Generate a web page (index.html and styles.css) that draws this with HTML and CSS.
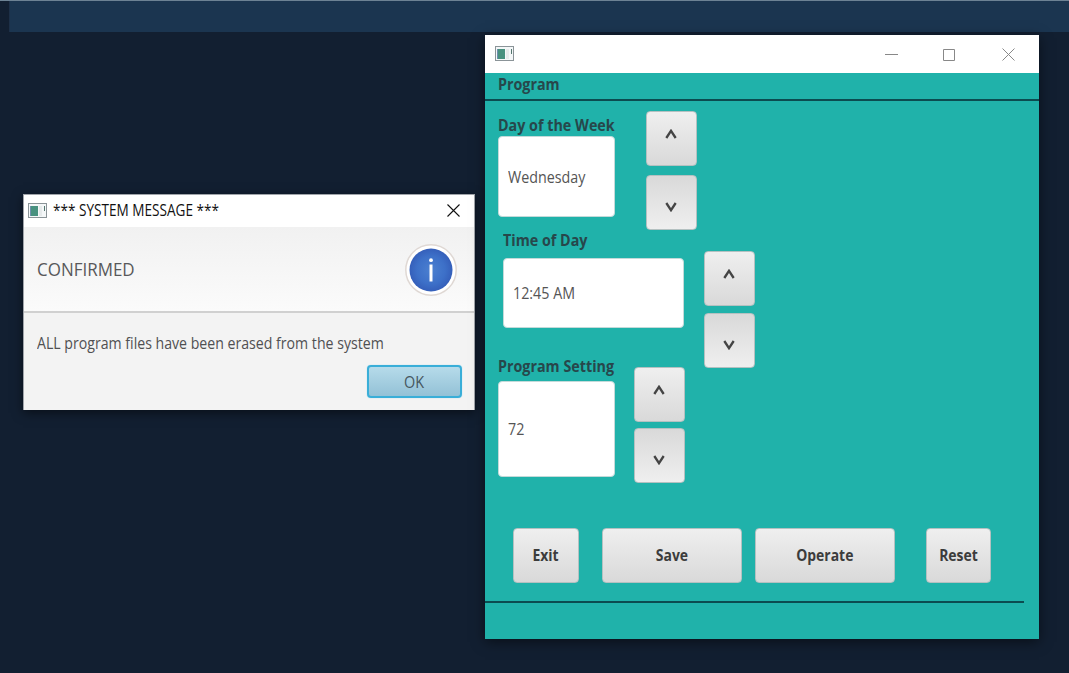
FILE: index.html
```html
<!DOCTYPE html>
<html lang="en">
<head>
<meta charset="utf-8">
<title>Program</title>
<link rel="stylesheet" href="styles.css">
</head>
<body>
<div class="desktop">
  <div class="top-strip"></div>

  <section class="window dialog">
    <header class="dialog-title">
      <svg class="app-icon" width="19" height="15" viewBox="0 0 19 15"><rect x=".5" y=".5" width="18" height="14" fill="#f4f7f8" stroke="#8b9498"/><rect x="2" y="3" width="8" height="10" fill="#48917f"/><path d="M2.500 3v10" stroke="#6f8fae"/><path d="M12.500 3v10" stroke="#e6eaeb" stroke-width="3"/><path d="M16.500 3v5" stroke="#54766f"/></svg>
      <span class="caption">*** SYSTEM MESSAGE ***</span>
      <svg class="close" width="13" height="13" viewBox="0 0 13 13"><path d="M.5.500l12 12M12.500.500l-12 12" stroke="#111" stroke-width="1.100"/></svg>
    </header>
    <div class="dialog-header">
      <span class="confirmed">CONFIRMED</span>
      <svg class="info" width="52" height="52" viewBox="0 0 52 52">
        <defs><radialGradient id="blue"><stop offset="0" stop-color="#4b80d0"/><stop offset=".65" stop-color="#3d70c8"/><stop offset="1" stop-color="#355fba"/></radialGradient></defs>
        <circle cx="26" cy="26" r="25.200" fill="#fff" stroke="#dfd8d4" stroke-width="1.500"/>
        <circle cx="26" cy="26" r="21.500" fill="url(#blue)"/>
        <circle cx="26" cy="16.200" r="1.900" fill="#fff"/>
        <path d="M26 20.500v17" stroke="#fff" stroke-width="3"/>
      </svg>
    </div>
    <div class="dialog-body">
      <p class="message"><span>ALL program files have been erased from the system</span></p>
      <button class="ok"><span>OK</span></button>
    </div>
  </section>

  <section class="window program">
    <header class="program-title">
      <svg class="app-icon" width="19" height="15" viewBox="0 0 19 15"><rect x=".5" y=".5" width="18" height="14" fill="#f4f7f8" stroke="#8b9498"/><rect x="2" y="3" width="8" height="10" fill="#48917f"/><path d="M2.500 3v10" stroke="#6f8fae"/><path d="M12.500 3v10" stroke="#e6eaeb" stroke-width="3"/><path d="M16.500 3v5" stroke="#54766f"/></svg>
      <svg class="controls" width="130" height="13" viewBox="0 0 130 13" fill="none" stroke="#888"><path d="M0 6.500h13M58.500 1.500h11v11h-11zM117.500.500l12 12M129.500.500l-12 12"/></svg>
    </header>
    <div class="heading"><span class="label">Program</span></div>
    <div class="group day">
      <div class="entry"><span class="label">Day of the Week</span><div class="field"><span>Wednesday</span></div></div>
      <div class="spinner">
        <button class="btn up"><svg width="12" height="10" viewBox="0 0 12 10"><path d="M1.300 9L6 1.800 10.700 9"/></svg></button>
        <button class="btn down"><svg width="12" height="10" viewBox="0 0 12 10"><path d="M1.300 1L6 8.200 10.700 1"/></svg></button>
      </div>
    </div>
    <div class="group time">
      <div class="entry"><span class="label">Time of Day</span><div class="field"><span>12:45 AM</span></div></div>
      <div class="spinner">
        <button class="btn up"><svg width="12" height="10" viewBox="0 0 12 10"><path d="M1.300 9L6 1.800 10.700 9"/></svg></button>
        <button class="btn down"><svg width="12" height="10" viewBox="0 0 12 10"><path d="M1.300 1L6 8.200 10.700 1"/></svg></button>
      </div>
    </div>
    <div class="group setting">
      <div class="entry"><span class="label">Program Setting</span><div class="field"><span>72</span></div></div>
      <div class="spinner">
        <button class="btn up"><svg width="12" height="10" viewBox="0 0 12 10"><path d="M1.300 9L6 1.800 10.700 9"/></svg></button>
        <button class="btn down"><svg width="12" height="10" viewBox="0 0 12 10"><path d="M1.300 1L6 8.200 10.700 1"/></svg></button>
      </div>
    </div>
    <div class="actions">
      <button class="btn exit"><span>Exit</span></button>
      <button class="btn save"><span>Save</span></button>
      <button class="btn operate"><span>Operate</span></button>
      <button class="btn reset"><span>Reset</span></button>
    </div>
    <div class="rule"></div>
  </section>
</div>
</body>
</html>
```
FILE: styles.css
```css
* { box-sizing: border-box; }
body { margin: 0; font-family: "Open Sans", "Noto Sans", sans-serif; }
button { margin: 0; padding: 0; font: inherit; }
svg { display: block; flex: none; }
span { white-space: nowrap; }

.desktop { position: relative; width: 1069px; height: 673px; overflow: hidden; background: #121f31; border-top: 1px solid #6d8294; }
.top-strip { height: 31px; margin-left: 9px; background: #1b3550; border-left: 1px solid #1d3048; }

.window { position: absolute; }
.dialog { left: 23px; top: 193px; width: 452px; height: 216px; border: 1px solid #a0a4aa; border-width: 1px 1px 0; background: #f3f3f3; box-shadow: 0 3px 10px rgba(0,0,0,.5); }
.dialog-title { display: flex; align-items: center; height: 32px; padding: 0 14px 2px 4px; background: #fff; }
.caption { margin-left: 6px; font-size: 15.500px; color: #111; transform-origin: left; transform: scaleX(.877); }
.close { margin-left: auto; }
.dialog-header { display: flex; align-items: center; justify-content: space-between; height: 86px; padding: 0 17px 0 13px; background: linear-gradient(#f1f1f1, #fbfbfb); border-bottom: 2px solid #d0d0d0; }
.info { margin-top: 2px; }
.confirmed { font-size: 17.500px; color: #58585a; transform-origin: left; transform: scaleX(.97); }
.dialog-body { display: flex; flex-direction: column; padding: 18px 12px 0 13px; }
.message { height: 24px; margin: 0; font-size: 16px; line-height: 24px; color: #505052; }
.message span { display: inline-block; transform-origin: left; transform: scaleX(.883); }
.ok { align-self: flex-end; width: 95px; height: 33px; margin-top: 10px; border: 2px solid #39aed8; border-radius: 4px; background: linear-gradient(#b6dbea, #93c1d6); box-shadow: 0 0 1px #6dc9e8; font-size: 16px; line-height: 28px; color: #46565e; }
.ok span { display: inline-block; transform: scaleX(.9); }

.program { left: 485px; top: 34px; width: 554px; height: 604px; background: #20b2aa; box-shadow: 0 3px 12px rgba(0,0,0,.5); }
.program-title { display: flex; align-items: center; justify-content: space-between; height: 38px; padding: 0 24px 2px 10px; background: #fff; }
.controls { margin-top: 2px; }
.heading { height: 28px; padding: 1px 13px 0; border-bottom: 2px solid #0b4c50; }
.label { display: block; width: max-content; font-size: 16px; font-weight: 700; line-height: 20px; color: #27474b; transform-origin: left; transform: scaleX(.895); }
.group { display: flex; padding-left: 13px; }
.entry { width: 117px; flex: none; }
.field { display: flex; align-items: center; width: 117px; padding: 0 0 0 9px; border: 1px solid #c3dad9; border-radius: 4px; background: #fff; font-size: 16px; color: #555; }
.field span { transform-origin: left; transform: scaleX(.893); }
.spinner { display: flex; flex-direction: column; }
.btn { display: flex; align-items: center; justify-content: center; width: 51px; height: 55px; flex: none; padding-bottom: 2px; border: 1px solid #b4c1c1; border-radius: 4px; background: linear-gradient(#efefef, #d9d9d9); font-size: 15.500px; font-weight: 700; color: #3c3c3c; }
.btn span { transform: scaleX(.9); }
.btn svg { fill: none; stroke: #444; stroke-width: 2.300; }
.up { padding: 0 1px 9px 0; }
.down { padding: 8px 1px 0 0; background: linear-gradient(#d9d9d9, #efefef); }

.day { height: 129px; padding-top: 14px; }
.day .field { height: 81px; margin-top: 1px; }
.day .spinner { gap: 9px; margin: -4px 0 0 31px; }
.time { height: 126px; padding-left: 18px; }
.time .entry, .time .field { width: 181px; }
.time .field { height: 70px; margin-top: 8px; }
.time .spinner { gap: 7px; margin: 21px 0 0 20px; }
.setting { height: 172px; }
.setting .field { height: 96px; margin-top: 5px; }
.setting .spinner { gap: 6px; margin: 11px 0 0 19px; }

.actions { display: flex; height: 73px; padding-left: 28px; }
.exit { width: 66px; }
.save { width: 140px; margin-left: 23px; }
.operate { width: 140px; margin-left: 13px; }
.reset { width: 65px; margin-left: 31px; }
.rule { width: 539px; height: 2px; background: #0b4c50; }
```
